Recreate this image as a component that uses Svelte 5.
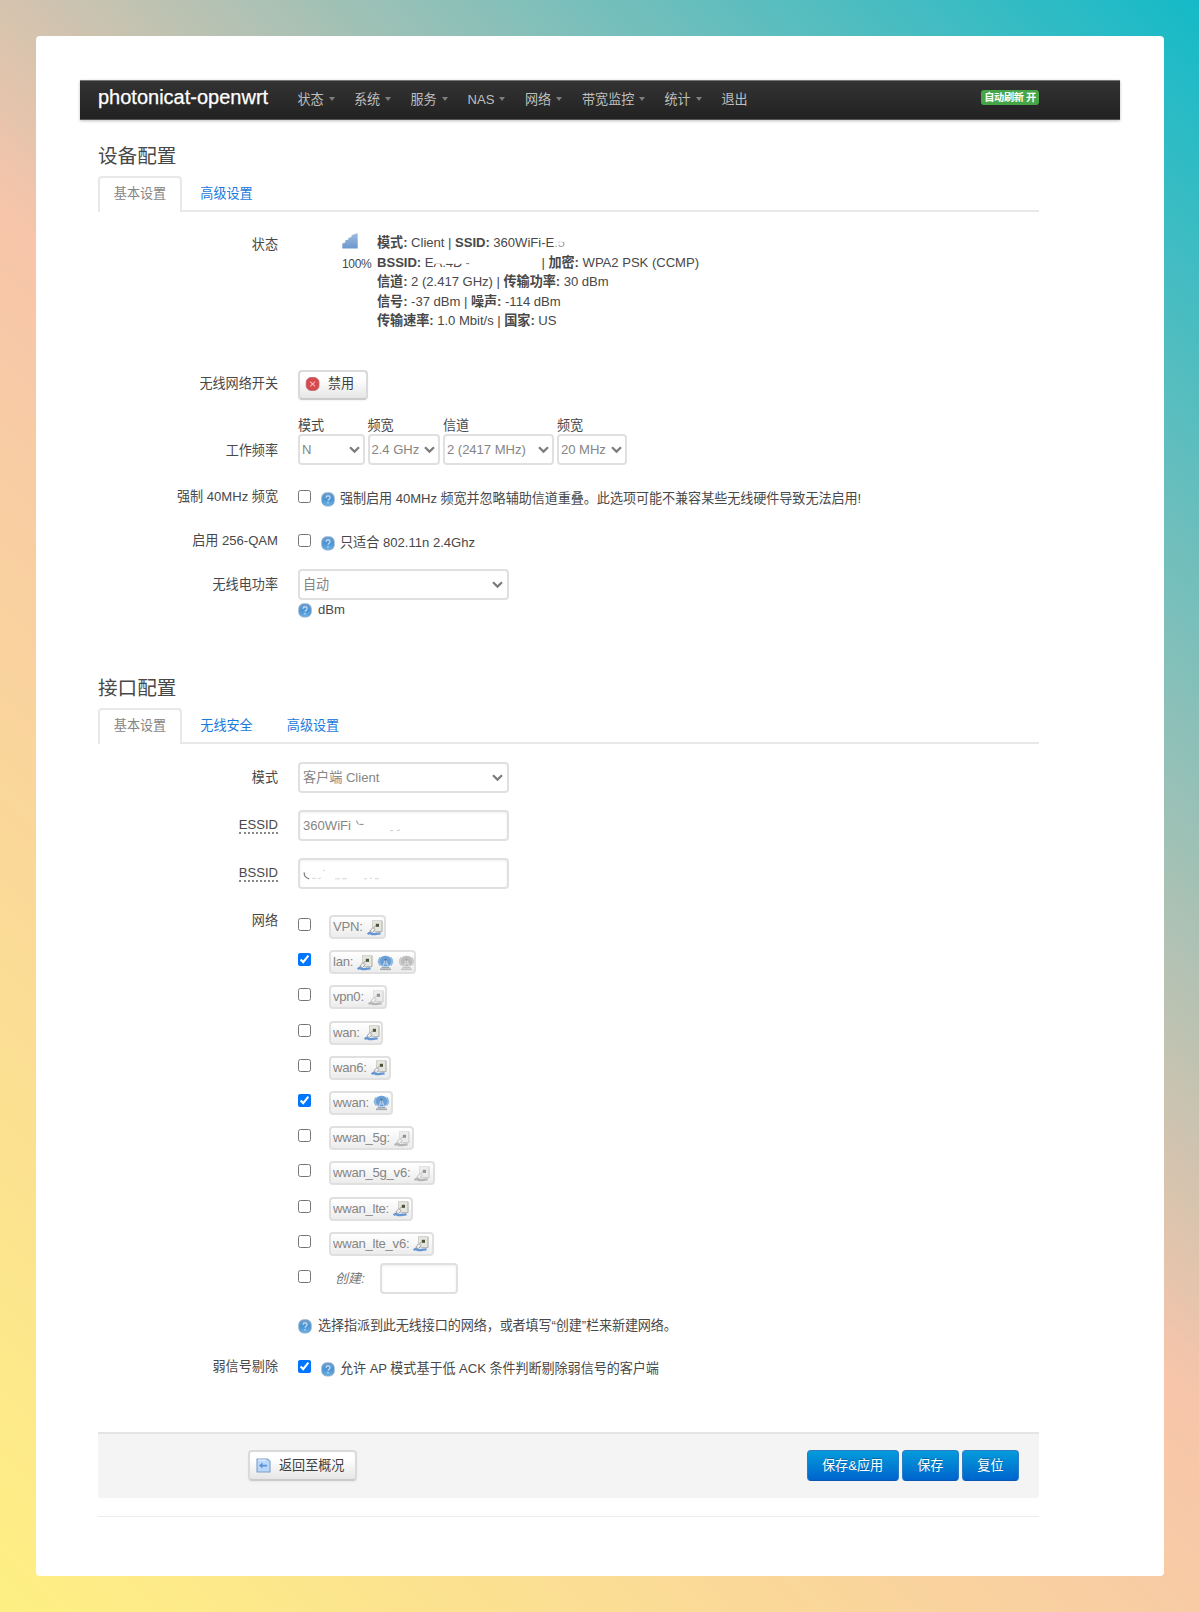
<script>
  const menu = [
    { label: '状态', width: 56.5 },
    { label: '系统', width: 56.5 },
    { label: '服务', width: 57 },
    { label: 'NAS', width: 57.5 },
    { label: '网络', width: 57 },
    { label: '带宽监控', width: 82.5 },
    { label: '统计', width: 57 },
    { label: '退出', width: 40, plain: true }
  ];
  const frequency = [
    { head: '模式', value: 'N', width: 67, gap: 2.5 },
    { head: '频宽', value: '2.4 GHz', width: 72, gap: 3.5 },
    { head: '信道', value: '2 (2417 MHz)', width: 111, gap: 3 },
    { head: '频宽', value: '20 MHz', width: 70, gap: 0 }
  ];
  const networks = [
    { name: 'VPN', icons: ['eth'], width: 57 },
    { name: 'lan', icons: ['eth', 'wifi', 'wifi-off'], width: 87, checked: true },
    { name: 'vpn0', icons: ['eth-off'], width: 58 },
    { name: 'wan', icons: ['eth'], width: 54 },
    { name: 'wan6', icons: ['eth'], width: 62 },
    { name: 'wwan', icons: ['wifi'], width: 64, checked: true },
    { name: 'wwan_5g', icons: ['eth-off'], width: 85 },
    { name: 'wwan_5g_v6', icons: ['eth-off'], width: 106 },
    { name: 'wwan_lte', icons: ['eth'], width: 84 },
    { name: 'wwan_lte_v6', icons: ['eth'], width: 105 }
  ];
</script>

{#snippet help()}
  <svg class="help" width="14" height="15" viewBox="0 0 14 15">
    <defs>
      <linearGradient id="ball" x1="0" y1="0" x2="0" y2="1">
        <stop offset="0" stop-color="#6f9fce" />
        <stop offset=".5" stop-color="#4a94d4" />
        <stop offset="1" stop-color="#6cb2e6" />
      </linearGradient>
    </defs>
    <rect x=".8" y=".8" width="12.4" height="13.2" rx="4.8" fill="url(#ball)" stroke="#86a6c4" stroke-width=".8" />
    <path d="M5 5.8q.1-1.9 2.1-1.9t2 1.7q0 1-1 1.6T7 8.8" fill="none" stroke="#cfe4f6" stroke-width="1.1" />
    <circle cx="7" cy="10.8" r=".8" fill="#cfe4f6" />
  </svg>
{/snippet}

{#snippet chevron()}
  <svg class="chevron" width="11" height="8" viewBox="0 0 11 8"><path d="M1 1.2 5.5 5.6 10 1.2" fill="none" stroke="#7c7c7c" stroke-width="2.2" /></svg>
{/snippet}

{#snippet netIcon(kind)}
  {#if kind.startsWith('eth')}
    <svg class="net" class:off={kind === 'eth-off'} width="16" height="16" viewBox="0 0 16 16">
      <rect x="5.4" y=".7" width="9.6" height="10.8" fill="#e6e6e0" stroke="#c8c8c3" stroke-width=".8" />
      <path d="M15 1v10.6H9" fill="none" stroke="#b0b0aa" stroke-width=".8" />
      <rect x="8.8" y="3.8" width="3.2" height="3" fill="#4b5434" />
      <path d="M2.8 11.2 5.8 7.6l2.4 2-2.8 3z" fill="#f0f0f0" stroke="#8f9395" stroke-width=".8" />
      <path d="M6.8 7.4 8.6 6.2" stroke="#999" stroke-width="1" />
      <path d="M.8 14.4q1.4-2 3-1t4.4.6 5.4-.6" fill="none" stroke="#6595d2" stroke-width="2.4" />
    </svg>
  {:else}
    <svg class="net" class:off={kind === 'wifi-off'} width="17" height="16" viewBox="0 0 17 16">
      <ellipse cx="8.5" cy="6.4" rx="7.9" ry="5.6" fill="#a9c8e8" />
      <path d="M3 2.2Q.6 6 3 10.4M14 2.2q2.4 3.8 0 8.2" fill="none" stroke="#8db4dd" stroke-width="1.2" />
      <ellipse cx="8.5" cy="6.2" rx="5.8" ry="5.4" fill="#6a9fd6" />
      <path d="M8.5 4.6 5 13M8.5 4.6l3.5 8.4M6.6 9h3.8M5.6 11.6h5.8" fill="none" stroke="#c4d8ec" stroke-width=".9" />
      <circle cx="8.5" cy="4.8" r="1" fill="#48688c" />
      <path d="M3 14.3h11" stroke="#a2a8ac" stroke-width="1.6" />
      <path d="M4.6 12.7h7.8" stroke="#8b969e" stroke-width="1" />
    </svg>
  {/if}
{/snippet}

<div class="backdrop">
  <main class="card">
    <header class="navbar">
      <strong class="brand">photonicat-openwrt</strong>
      <nav>
        {#each menu as item}
          <a class="menu-item" style:width="{item.width}px">{item.label}{#if !item.plain}<i class="caret"></i>{/if}</a>
        {/each}
      </nav>
      <span class="refresh">自动刷新 开</span>
    </header>

    <div class="content">
      <section class="device">
        <h2>设备配置</h2>
        <div class="tabs"><span class="tab active">基本设置</span><span class="tab">高级设置</span></div>

        <div class="row status">
          <label>状态</label>
          <div class="field signal">
            <div class="bars">
              <svg width="16" height="16" viewBox="0 0 16 16">
                <defs><linearGradient id="sig" x1="0" y1="0" x2="0" y2="1"><stop offset="0" stop-color="#9dbbe0" /><stop offset="1" stop-color="#6b98ce" /></linearGradient></defs>
                <path d="M.3 15.5v-5L3.2 9.4V7.6L6.4 6.6V5L9.4 4V2.4L12.6 1l3.1-.8v15.3z" fill="url(#sig)" />
              </svg>
              <span>100%</span>
            </div>
            <div class="info">
              <p><b>模式:</b> Client | <b>SSID:</b> 360WiFi-E<span class="smudge end">:5</span></p>
              <p class="spread"><span><b>BSSID:</b> E<span class="smudge">A:4D</span><span class="dash">-</span></span><span>| <b>加密:</b> WPA2 PSK (CCMP)</span></p>
              <p><b>信道:</b> 2 (2.417 GHz) | <b>传输功率:</b> 30 dBm</p>
              <p><b>信号:</b> -37 dBm | <b>噪声:</b> -114 dBm</p>
              <p><b>传输速率:</b> 1.0 Mbit/s | <b>国家:</b> US</p>
            </div>
          </div>
        </div>

        <div class="row toggle">
          <label>无线网络开关</label>
          <button class="btn">
            <svg width="15" height="14" viewBox="0 0 15 14">
              <rect x="1.2" y=".6" width="12.8" height="12.8" rx="4.8" fill="#d9484c" stroke="#bd6668" stroke-width=".9" />
              <path d="M5.2 4.6 10 9.4M10 4.6 5.2 9.4" stroke="#f3b9b9" stroke-width="1.1" />
            </svg>
            禁用
          </button>
        </div>

        <div class="row freq">
          <label>工作频率</label>
          <div class="field">
            {#each frequency as f}
              <div class="freq-cell" style:width="{f.width}px" style:margin-right="{f.gap}px">
                <span>{f.head}</span>
                <div class="control">{f.value}{@render chevron()}</div>
              </div>
            {/each}
          </div>
        </div>

        <div class="row check ht40">
          <label>强制 40MHz 频宽</label>
          <div class="field"><input type="checkbox" /><p class="hint long">{@render help()}强制启用 40MHz 频宽并忽略辅助信道重叠。此选项可能不兼容某些无线硬件导致无法启用!</p></div>
        </div>

        <div class="row check qam">
          <label>启用 256-QAM</label>
          <div class="field"><input type="checkbox" /><p class="hint">{@render help()}只适合 802.11n 2.4Ghz</p></div>
        </div>

        <div class="row power">
          <label>无线电功率</label>
          <div class="stack">
            <div class="control wide">自动{@render chevron()}</div>
            <p class="hint unit">{@render help()}dBm</p>
          </div>
        </div>
      </section>

      <section class="interface">
        <h2>接口配置</h2>
        <div class="tabs"><span class="tab active">基本设置</span><span class="tab">无线安全</span><span class="tab">高级设置</span></div>

        <div class="row mode">
          <label>模式</label>
          <div class="control wide">客户端 Client{@render chevron()}</div>
        </div>
        <div class="row text">
          <label><abbr>ESSID</abbr></label>
          <div class="control wide input">
            360WiFi
            <svg class="trace" width="60" height="18" viewBox="0 0 60 18"><path d="M1.6 3.5q.2 3.2 2.6 4M4.6 7.4h4" fill="none" stroke="#888" stroke-width="1" /><path d="M35 13.6h3M42 13.8l3-1" stroke="#bbb" stroke-width=".8" /></svg>
          </div>
        </div>
        <div class="row text">
          <label><abbr>BSSID</abbr></label>
          <div class="control wide input">
            <svg class="trace first" width="90" height="18" viewBox="0 0 90 18"><path d="M1.2 7.4q-.4 5.2 5 6.4" fill="none" stroke="#777" stroke-width="1.2" /><path d="M9 13.4h4M15 13.6l3-.6M20 6l2-.8M32 13.8h5M39 13.8h5M61 13.8h3M67 13.4h2M72 13.8h4" fill="none" stroke="#ccc" stroke-width=".8" /></svg>
          </div>
        </div>

        <div class="row nets">
          <label>网络</label>
          <div class="stack">
            {#each networks as net}
              <div class="net-row">
                <input type="checkbox" checked={net.checked} />
                <span class="badge" style:width="{net.width}px"><span class="net-name">{net.name}:</span>{#each net.icons as kind}{@render netIcon(kind)}{/each}</span>
              </div>
            {/each}
            <div class="net-row create">
              <input type="checkbox" />
              <em>创建:</em>
              <div class="control blank"></div>
            </div>
            <p class="hint choose">{@render help()}选择指派到此无线接口的网络，或者填写“创建”栏来新建网络。</p>
          </div>
        </div>

        <div class="row check weak">
          <label>弱信号剔除</label>
          <div class="field"><input type="checkbox" checked /><p class="hint long">{@render help()}允许 AP 模式基于低 ACK 条件判断剔除弱信号的客户端</p></div>
        </div>
      </section>

      <footer class="actions">
        <button class="btn back">
          <svg width="15" height="15" viewBox="0 0 15 15">
            <path d="M1 1h10.6L14 3.2V14H1z" fill="#b9d7f8" stroke="#7f9fca" stroke-width="1.1" />
            <path d="M2.2 2.2h8" stroke="#e9f4ff" />
            <path d="M3 7.5 6.4 4.6v2.1H11v1.7H6.4v2.1z" fill="#5b90dc" />
          </svg>
          返回至概况
        </button>
        <div class="primary-group">
          <button class="primary">保存&amp;应用</button>
          <button class="primary">保存</button>
          <button class="primary">复位</button>
        </div>
      </footer>
      <hr />
    </div>
  </main>
</div>

<style>
  :global(body) { margin: 0; }
  * { box-sizing: border-box; }
  .backdrop {
    width: 1199px;
    height: 1612px;
    padding: 36px 35px 36px 36px;
    background: linear-gradient(45deg, #fef083 0%, #f7c5aa 50%, #14bac8 100%);
    font-family: "Liberation Sans", "Noto Sans CJK SC", sans-serif;
    font-size: 13.1px;
    line-height: 20px;
    color: #484848;
  }
  .card { height: 1540px; padding: 44px 44px 0; background: #fff; border-radius: 4px; }
  p, h2 { margin: 0; }
  button { font: inherit; }

  .navbar {
    display: flex;
    width: 1040px;
    height: 40px;
    padding-left: 18px;
    background: linear-gradient(#333, #222);
    border-top: 1px solid #777;
    border-bottom: 1px solid #555;
    box-shadow: 0 1px 3px rgba(0, 0, 0, .25);
  }
  .brand { width: 200px; font-size: 20px; font-weight: 400; color: #fff; line-height: 32px; white-space: nowrap; -webkit-text-stroke: .25px #fff; }
  nav { display: flex; margin-left: -.5px; }
  .menu-item { display: flex; align-items: center; height: 38px; color: #bfbfbf; white-space: nowrap; }
  .caret { margin: 0 0 2px 5px; border: 3.5px solid transparent; border-top: 4px solid #7d7d7d; border-bottom: 0; }
  .refresh {
    width: 58px;
    height: 15px;
    margin: 9px 81px 0 auto;
    text-align: center;
    border-radius: 3px;
    background: #46a546;
    color: #fff;
    font-size: 10.2px;
    font-weight: 700;
    line-height: 15px;
    letter-spacing: -.4px;
    white-space: nowrap;
  }

  .content { width: 941px; margin-left: 18px; }
  h2 { font-size: 19.6px; font-weight: 400; line-height: 36px; }
  .device { height: 550px; padding-top: 18px; }
  .device h2, .interface h2 { height: 38px; }
  .tabs { display: flex; gap: 2.5px; height: 36px; border-bottom: 2px solid #e8e8e8; }
  .tab { height: 36px; width: 84px; border: 2px solid transparent; border-bottom: 0; text-align: center; line-height: 32px; color: #1a79dc; border-radius: 4px 4px 0 0; }
  .tab.active { color: #858585; border-color: #e8e8e8; background: #fff; }

  .row { display: flex; gap: 20px; }
  .row > label { width: 180px; text-align: right; flex: none; white-space: nowrap; }
  .field { display: flex; }
  .stack { display: flex; flex-direction: column; }
  input { width: 13px; height: 13px; margin: 0; flex: none; }

  .status { height: 138px; margin-top: 20px; }
  .status label { padding-top: 3px; }
  .signal { padding-left: 44px; }
  .bars { display: flex; flex-direction: column; width: 35px; padding-top: 1px; font-size: 12px; }
  .bars span { line-height: 31px; height: 20px; letter-spacing: -.3px; }
  .bars svg { display: block; flex: none; }
  .info { padding-top: 1px; line-height: 19.5px; letter-spacing: -.03px; white-space: nowrap; }
  .spread { display: flex; justify-content: space-between; width: 322px; }
  .smudge { display: inline-block; clip-path: inset(58% 0 0 0); }
  .smudge.end { clip-path: inset(45% 0 0 0); opacity: .5; }
  .dash { margin-left: 3px; opacity: .7; }

  .btn {
    display: flex;
    align-items: center;
    gap: 8px;
    height: 31px;
    padding: 0 8px 0 6px;
    border: 2px solid #dadada;
    border-bottom-color: #cbcbcb;
    border-radius: 4px;
    background: linear-gradient(#fff 25%, #e6e6e6);
    color: #404040;
    white-space: nowrap;
    box-shadow: 0 1px 2px rgba(0, 0, 0, .05);
  }
  .btn svg { flex: none; }
  .toggle { height: 47px; }
  .toggle label { padding-top: 4px; }
  .toggle .btn { width: 70px; height: 30px; padding: 0 8px 2px 5px; }

  .control {
    display: flex;
    align-items: center;
    height: 31px;
    padding: 0 4px 0 3px;
    border: 2px solid #e0e0e0;
    border-radius: 4px;
    background: #fff;
    color: #858585;
    white-space: nowrap;
  }
  .chevron { margin-left: auto; }
  .wide { width: 210.5px; padding-right: 4px; }
  .input, .blank { box-shadow: inset 0 1px 3px rgba(0, 0, 0, .06); }
  .trace { margin-left: 4px; }
  .trace.first { margin-left: 0; }

  .freq { height: 70px; }
  .freq label { padding-top: 24px; }
  .freq-cell span { display: block; height: 17px; line-height: 18px; }
  .freq-cell .control { height: 31px; padding: 0 3px 0 2px; letter-spacing: -.05px; }
  .check input { margin: 3px 10px 0 0; }
  .hint { display: flex; gap: 5px; white-space: nowrap; }
  .hint.long { letter-spacing: -.06px; }
  .help { flex: none; margin-top: 3px; }
  .check .hint { padding-top: 2px; }
  .ht40 { height: 44px; }
  .qam { height: 38px; }
  .power label { padding-top: 6px; }
  .unit { gap: 6px; margin-top: -.5px; }

  .interface { height: 762px; }
  .mode { margin-top: 18px; height: 48px; }
  .mode label { padding-top: 6px; }
  .text { height: 48px; }
  .text label { padding-top: 5px; }
  abbr { text-decoration: none; display: inline-block; line-height: 15px; border-bottom: 2px dotted #888; }

  .nets { padding-top: 5px; height: 451px; }
  .net-row { display: flex; height: 35.2px; align-items: flex-start; }
  .net-row input { margin: 7px 18px 0 0; }
  .badge {
    display: flex;
    align-items: center;
    gap: 4px;
    height: 24px;
    margin-top: 4px;
    padding-left: 2px;
    border: 2px solid #e0e0e0;
    border-radius: 4px;
    background: linear-gradient(#fff, #ececec);
    color: #858585;
    white-space: nowrap;
  }
  .net-name { letter-spacing: -.25px; }
  .net { flex: none; margin-top: 1px; }
  .off { filter: grayscale(1); opacity: .6; }
  .create { height: 50px; }
  .create input { margin-right: 24px; }
  .create em { width: 45px; color: #777; line-height: 31px; }
  .create .control { width: 78px; height: 31px; }
  .choose { margin-top: 3px; gap: 6px; letter-spacing: -.12px; }
  .weak { height: 60px; }

  .actions { display: flex; justify-content: space-between; height: 66px; padding: 16px 20px 0 150px; background: #f4f4f4; border-top: 2px solid #e4e4e4; border-radius: 0 0 3px 3px; }
  .back { width: 109px; padding-left: 6px; }
  .primary-group { display: flex; gap: 3px; }
  .primary {
    height: 31px;
    padding: 0 14.5px;
    border: 1px solid #2b7cc4;
    border-bottom-color: #0a56b5;
    border-radius: 4px;
    background: linear-gradient(#049cdb, #0064cd);
    color: #fff;
    text-shadow: 0 -1px 0 rgba(0, 0, 0, .25);
    white-space: nowrap;
  }
  hr { margin: 17.5px 0 0; border: 0; border-top: 1.5px solid #ececec; }
</style>
